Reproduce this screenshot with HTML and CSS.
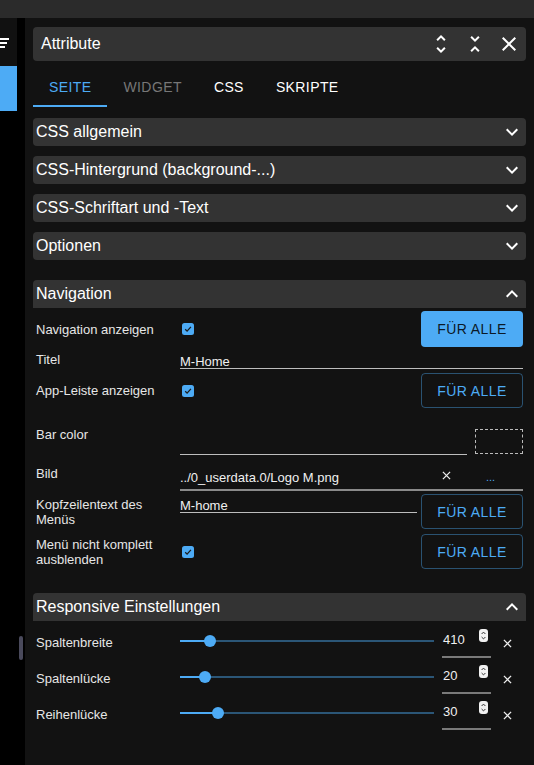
FILE: index.html
```html
<!DOCTYPE html>
<html lang="de">
<head>
<meta charset="utf-8">
<title>Attribute</title>
<link rel="stylesheet" href="styles.css">
</head>
<body>
<div class="topbar"></div>
<div class="main">
  <aside class="sidebar">
    <div class="side-top">
      <svg class="sort-icon" width="17" height="10" viewBox="0 0 17 10"><rect x="0" y="0" width="9" height="2"/><rect x="0" y="4" width="7" height="2"/><rect x="0" y="8" width="5" height="2"/></svg>
    </div>
    <div class="side-active"></div>
  </aside>
  <div class="gutter"><div class="scroll-thumb"></div></div>
  <main class="panel">
    <div class="panel-head">
      <span class="panel-title">Attribute</span>
      <span class="icon-btn"><svg viewBox="0 0 24 24"><path d="M12 5.83 15.17 9l1.41-1.41L12 3 7.41 7.59 8.83 9zm0 12.34L8.83 15l-1.41 1.41L12 21l4.59-4.59L15.17 15z"/></svg></span>
      <span class="icon-btn"><svg viewBox="0 0 24 24"><path d="M7.41 18.59 8.83 20 12 16.83 15.17 20l1.41-1.41L12 14zm9.18-13.18L15.17 4 12 7.17 8.83 4 7.41 5.41 12 10z"/></svg></span>
      <span class="icon-btn"><svg viewBox="0 0 24 24"><path d="M19 6.41 17.59 5 12 10.59 6.41 5 5 6.41 10.59 12 5 17.59 6.41 19 12 13.41 17.59 19 19 17.59 13.41 12z"/></svg></span>
    </div>
    <nav class="tabs">
      <span class="tab active">Seite</span>
      <span class="tab disabled">Widget</span>
      <span class="tab">CSS</span>
      <span class="tab">Skripte</span>
    </nav>
    <div class="accordions">
      <section class="acc"><div class="acc-head"><span class="acc-title">CSS allgemein</span><svg viewBox="0 0 24 24"><path d="M16.59 8.59 12 13.17 7.41 8.59 6 10l6 6 6-6z"/></svg></div></section>
      <section class="acc"><div class="acc-head"><span class="acc-title">CSS-Hintergrund (background-...)</span><svg viewBox="0 0 24 24"><path d="M16.59 8.59 12 13.17 7.41 8.59 6 10l6 6 6-6z"/></svg></div></section>
      <section class="acc"><div class="acc-head"><span class="acc-title">CSS-Schriftart und -Text</span><svg viewBox="0 0 24 24"><path d="M16.59 8.59 12 13.17 7.41 8.59 6 10l6 6 6-6z"/></svg></div></section>
      <section class="acc"><div class="acc-head"><span class="acc-title">Optionen</span><svg viewBox="0 0 24 24"><path d="M16.59 8.59 12 13.17 7.41 8.59 6 10l6 6 6-6z"/></svg></div></section>

      <section class="acc open">
        <div class="acc-head"><span class="acc-title">Navigation</span><svg viewBox="0 0 24 24"><path d="M12 8l-6 6 1.41 1.41L12 10.83l4.59 4.58L18 14z"/></svg></div>
        <div class="acc-body nav-body">
          <div class="row">
            <span class="label">Navigation anzeigen</span>
            <span class="check"><svg viewBox="0 0 12 12"><rect width="12" height="12" rx="2.5" fill="#4dabf5"/><path d="M3.2 6.2 5.1 8.1 8.9 3.9" fill="none" stroke="#1b1b1b" stroke-width="1.3"/></svg></span>
            <span class="btn filled">Für alle</span>
          </div>
          <div class="row text-row">
            <span class="label">Titel</span>
            <span class="field">M-Home</span>
          </div>
          <div class="row h35">
            <span class="label">App-Leiste anzeigen</span>
            <span class="check"><svg viewBox="0 0 12 12"><rect width="12" height="12" rx="2.5" fill="#4dabf5"/><path d="M3.2 6.2 5.1 8.1 8.9 3.9" fill="none" stroke="#1b1b1b" stroke-width="1.3"/></svg></span>
            <span class="btn outlined">Für alle</span>
          </div>
          <div class="row color-row">
            <span class="label">Bar color</span>
            <span class="field empty"></span>
            <span class="swatch"></span>
          </div>
          <div class="row file-row">
            <span class="label">Bild</span>
            <span class="field file-field">
              <span class="file-name">../0_userdata.0/Logo M.png</span>
              <svg class="clear-x" viewBox="0 0 10 10"><path d="M1 1 9 9M9 1 1 9"/></svg>
              <span class="more">...</span>
            </span>
          </div>
          <div class="row h35 gap-below">
            <span class="label">Kopfzeilentext des Menüs</span>
            <span class="field top-field">M-home</span>
            <span class="btn outlined">Für alle</span>
          </div>
          <div class="row h35">
            <span class="label">Menü nicht komplett ausblenden</span>
            <span class="check"><svg viewBox="0 0 12 12"><rect width="12" height="12" rx="2.5" fill="#4dabf5"/><path d="M3.2 6.2 5.1 8.1 8.9 3.9" fill="none" stroke="#1b1b1b" stroke-width="1.3"/></svg></span>
            <span class="btn outlined">Für alle</span>
          </div>
        </div>
      </section>

      <section class="acc open">
        <div class="acc-head"><span class="acc-title">Responsive Einstellungen</span><svg viewBox="0 0 24 24"><path d="M12 8l-6 6 1.41 1.41L12 10.83l4.59 4.58L18 14z"/></svg></div>
        <div class="acc-body">
          <div class="srow">
            <span class="label">Spaltenbreite</span>
            <span class="slider" style="--p:11.8%"><span class="track"></span><span class="fill"></span><span class="thumb"></span></span>
            <span class="num"><span class="num-text">410</span><svg class="spin" viewBox="0 0 9 13"><rect width="9" height="13" rx="3" fill="#f2f2f2"/><path d="M2.6 5 4.5 3.1 6.4 5M2.6 8 4.5 9.9 6.4 8" fill="none" stroke="#333" stroke-width="1"/></svg></span>
            <span class="xbtn"><svg viewBox="0 0 10 10"><path d="M1 1 9 9M9 1 1 9"/></svg></span>
          </div>
          <div class="srow">
            <span class="label">Spaltenlücke</span>
            <span class="slider" style="--p:9.8%"><span class="track"></span><span class="fill"></span><span class="thumb"></span></span>
            <span class="num"><span class="num-text">20</span><svg class="spin" viewBox="0 0 9 13"><rect width="9" height="13" rx="3" fill="#f2f2f2"/><path d="M2.6 5 4.5 3.1 6.4 5M2.6 8 4.5 9.9 6.4 8" fill="none" stroke="#333" stroke-width="1"/></svg></span>
            <span class="xbtn"><svg viewBox="0 0 10 10"><path d="M1 1 9 9M9 1 1 9"/></svg></span>
          </div>
          <div class="srow">
            <span class="label">Reihenlücke</span>
            <span class="slider" style="--p:15%"><span class="track"></span><span class="fill"></span><span class="thumb"></span></span>
            <span class="num"><span class="num-text">30</span><svg class="spin" viewBox="0 0 9 13"><rect width="9" height="13" rx="3" fill="#f2f2f2"/><path d="M2.6 5 4.5 3.1 6.4 5M2.6 8 4.5 9.9 6.4 8" fill="none" stroke="#333" stroke-width="1"/></svg></span>
            <span class="xbtn"><svg viewBox="0 0 10 10"><path d="M1 1 9 9M9 1 1 9"/></svg></span>
          </div>
        </div>
      </section>
    </div>
  </main>
</div>
</body>
</html>
```
FILE: styles.css
```css
* { box-sizing: border-box; margin: 0; padding: 0; }
html, body { width: 534px; height: 765px; overflow: hidden; background: #000; }
body { font-family: "Liberation Sans", Arial, sans-serif; color: #e8e8e8; }

.topbar { height: 18px; background: #2b2b2b; }
.main { display: flex; height: 747px; }

.sidebar { width: 17px; flex: none; display: flex; flex-direction: column; background: #000; }
.side-top { height: 48px; background: #111; padding-top: 20px; }
.sort-icon { display: block; fill: #fff; }
.side-active { height: 45px; background: #4dabf5; }

.gutter { width: 8px; flex: none; background: #000; padding: 618px 0 0 2px; }
.scroll-thumb { width: 4px; height: 24px; border-radius: 2px; background: #4a4a5c; }

.panel { flex: 1; background: #121212; padding: 9px 8px 0; }

.panel-head { height: 34px; background: #333; border-radius: 4px; display: flex; align-items: center; padding-left: 8px; font-size: 16px; color: #fff; }
.panel-title { flex: 1; }
.icon-btn { width: 34px; height: 34px; display: flex; align-items: center; justify-content: center; }
.icon-btn svg { width: 24px; height: 24px; fill: #fff; }

.tabs { display: flex; height: 46px; }
.tab { position: relative; padding: 16px 16px 10px; font-size: 14px; line-height: 20px; letter-spacing: 0.4px; text-transform: uppercase; color: #fff; }
.tab.active { color: #4dabf5; }
.tab.active::after { content: ""; position: absolute; left: 0; right: 0; bottom: 0; height: 2px; background: #4dabf5; }
.tab.disabled { color: #777; }

.accordions { margin-top: 11px; display: flex; flex-direction: column; gap: 10px; }
.acc-head { height: 28px; background: #333; border-radius: 4px; display: flex; align-items: center; padding: 0 2px 0 3px; font-size: 16px; color: #fff; }
.acc-title { flex: 1; }
.acc-head svg { width: 24px; height: 24px; fill: #fff; }
.acc.open { margin-top: 10px; }
.acc.open .acc-head { border-radius: 4px 4px 0 0; }
.acc-body { padding: 3px 3px 0; }
.nav-body { padding-bottom: 4px; }

.row { display: flex; align-items: center; height: 36px; font-size: 13px; }
.row.h35 { height: 35px; }
.row.gap-below { margin-bottom: 5px; }
.label { width: 144px; flex: none; line-height: 15px; font-size: 13px; color: #e6e6e6; }

.check { width: 12px; height: 12px; margin-left: 2px; display: flex; }
.check svg { width: 12px; height: 12px; }

.btn { margin-left: auto; width: 102px; height: 100%; border-radius: 4px; font-size: 14px; letter-spacing: 0.4px; text-transform: uppercase; display: flex; align-items: center; justify-content: center; }
.btn.filled { background: #4dabf5; color: rgba(0, 0, 0, 0.87); }
.btn.outlined { border: 1px solid rgba(77, 171, 245, 0.42); color: #4dabf5; }

.field { flex: 1; font-size: 13px; line-height: 13px; color: #f0f0f0; border-bottom: 1px solid #bdbdbd; }

.text-row { align-items: flex-start; height: 26px; }
.text-row .label { margin-top: 5px; }
.text-row .field { margin-top: 8px; }

.color-row { align-items: flex-start; height: 48px; }
.color-row .label { margin-top: 19px; }
.color-row .field { margin-top: 30px; height: 17px; }
.swatch { margin-top: 21px; margin-left: 8px; width: 48px; height: 25px; border: 1px dashed #bbb; }

.file-row { align-items: flex-start; height: 38px; }
.file-row .label { margin-top: 10px; }
.file-field { margin-top: 14px; display: flex; align-items: center; line-height: 15px; padding-bottom: 4px; border-bottom: 2px solid #8a8a8a; }
.file-name { flex: 1; }
.clear-x { width: 9px; height: 9px; margin-top: -4px; margin-right: 35px; stroke: #eee; stroke-width: 1.4; fill: none; }
.more { width: 10px; margin-right: 27px; font-size: 11px; color: #4dabf5; line-height: 15px; }

.top-field { align-self: flex-start; margin-top: 5px; margin-right: 4px; }

.srow { display: flex; align-items: center; height: 36px; font-size: 13px; }
.slider { flex: 1; position: relative; height: 12px; margin-top: -2px; }
.track { position: absolute; left: 0; right: 0; top: 5px; height: 2px; background: #2b5677; }
.fill { position: absolute; left: 0; top: 5px; height: 2px; width: var(--p); background: #4dabf5; }
.thumb { position: absolute; top: 0; left: var(--p); width: 12px; height: 12px; margin-left: -6px; border-radius: 50%; background: #4dabf5; }

.num { width: 49px; height: 34px; margin-left: 8px; align-self: flex-start; display: flex; align-items: flex-start; padding: 8px 3px 0 1px; border-bottom: 2px solid #7a7a7a; }
.num-text { flex: 1; line-height: 15px; color: #f0f0f0; }
.spin { width: 9px; height: 13px; margin-top: -3px; }

.xbtn { width: 32px; display: flex; justify-content: center; margin-top: 2px; }
.xbtn svg { width: 9px; height: 9px; stroke: #eee; stroke-width: 1.4; fill: none; }
```
